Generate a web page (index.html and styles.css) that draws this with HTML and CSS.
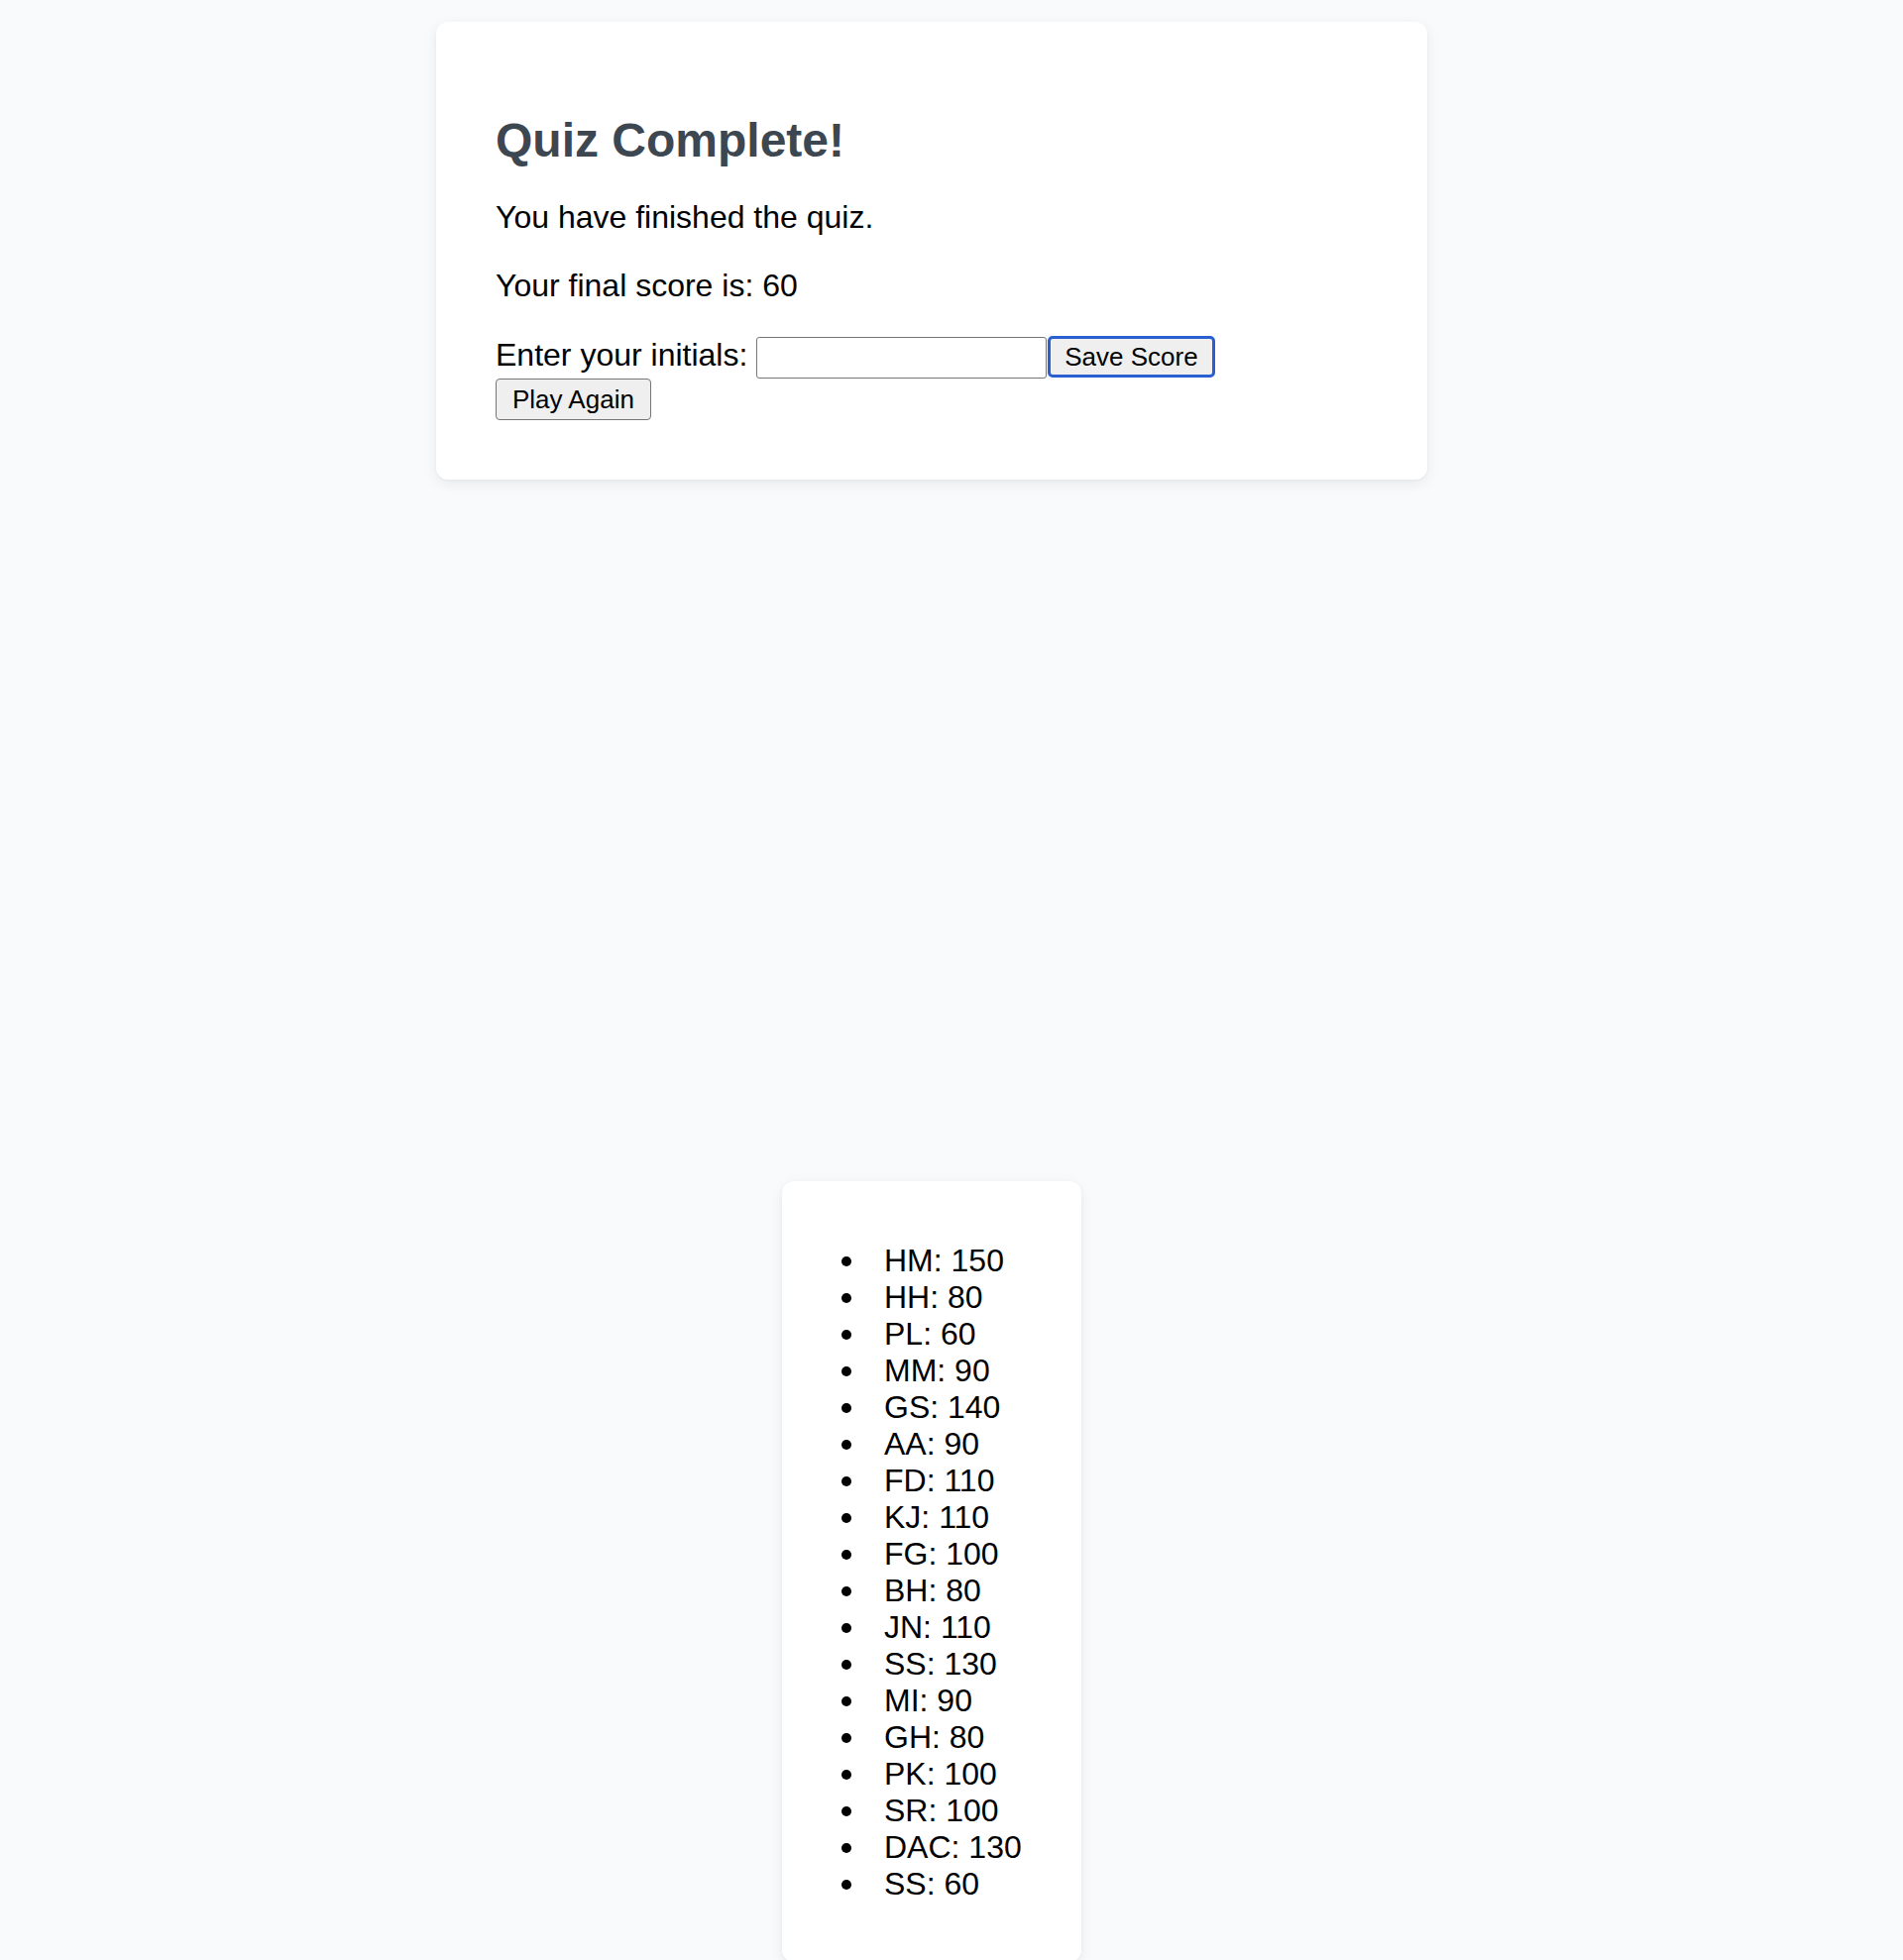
FILE: index.html
```html
<!DOCTYPE html>
<html lang="en">
<head>
<meta charset="utf-8">
<title>Quiz Complete</title>
<link rel="stylesheet" href="styles.css">
</head>
<body>
<div class="page">
  <section class="card result">
    <h1 class="title">Quiz Complete!</h1>
    <p class="text">You have finished the quiz.</p>
    <p class="text">Your final score is: 60</p>
    <div class="save-row">Enter your initials: <input class="initials" type="text"><button class="btn btn-focus">Save Score</button><br><button class="btn">Play Again</button></div>
  </section>
  <section class="card board">
    <ul class="scores">
      <li>HM: 150</li>
      <li>HH: 80</li>
      <li>PL: 60</li>
      <li>MM: 90</li>
      <li>GS: 140</li>
      <li>AA: 90</li>
      <li>FD: 110</li>
      <li>KJ: 110</li>
      <li>FG: 100</li>
      <li>BH: 80</li>
      <li>JN: 110</li>
      <li>SS: 130</li>
      <li>MI: 90</li>
      <li>GH: 80</li>
      <li>PK: 100</li>
      <li>SR: 100</li>
      <li>DAC: 130</li>
      <li>SS: 60</li>
    </ul>
  </section>
</div>
</body>
</html>
```

FILE: styles.css
```css
html, body {
  margin: 0;
  padding: 0;
  background: #f9fafb;
}
body {
  font-family: "Liberation Sans", Arial, Helvetica, sans-serif;
  color: #000;
  font-size: 32px;
}
.page {
  width: 1880px;
  display: flex;
  flex-direction: column;
  align-items: center;
  padding-top: 22px;
}
.card {
  background: #fff;
  border-radius: 12px;
  box-shadow: 0 4px 14px rgba(0, 0, 0, 0.07), 0 1px 3px rgba(0, 0, 0, 0.04);
  padding: 60px;
  box-sizing: border-box;
}
.result {
  width: 1000px;
}
.title {
  font-size: 48px;
  font-weight: 700;
  color: #3d4752;
  margin: 32px 0;
  line-height: normal;
}
.text {
  font-size: 32px;
  margin: 32px 0;
  line-height: normal;
}
.save-row {
  font-size: 32px;
  line-height: normal;
}
.initials {
  box-sizing: border-box;
  width: 293px;
  height: 42px;
  border: 1px solid #767676;
  border-radius: 3px;
  padding: 5px 6px;
  font: 26px "Liberation Sans", Arial, sans-serif;
  vertical-align: baseline;
  margin: 0;
  background: #fff;
}
.btn {
  font: 26px "Liberation Sans", Arial, sans-serif;
  color: #000;
  background: #efefef;
  border: 1px solid #767676;
  border-radius: 4px;
  padding: 5px 16px;
  margin: 0;
  height: 42px;
  box-sizing: border-box;
  line-height: normal;
}
.btn-focus {
  border: 3px solid #2a5fd1;
  border-radius: 5px;
  padding: 3px 14px;
  margin-left: 1px;
}
.board {
  margin-top: 708px;
  width: 302px;
}
.scores {
  margin: 0;
  padding: 2px 0 0 43px;
  font-size: 32px;
  line-height: normal;
  list-style: none;
}
.scores li {
  position: relative;
}
.scores li::before {
  content: "";
  position: absolute;
  left: -43px;
  top: 14px;
  width: 10px;
  height: 10px;
  border-radius: 50%;
  background: #000;
}
```
